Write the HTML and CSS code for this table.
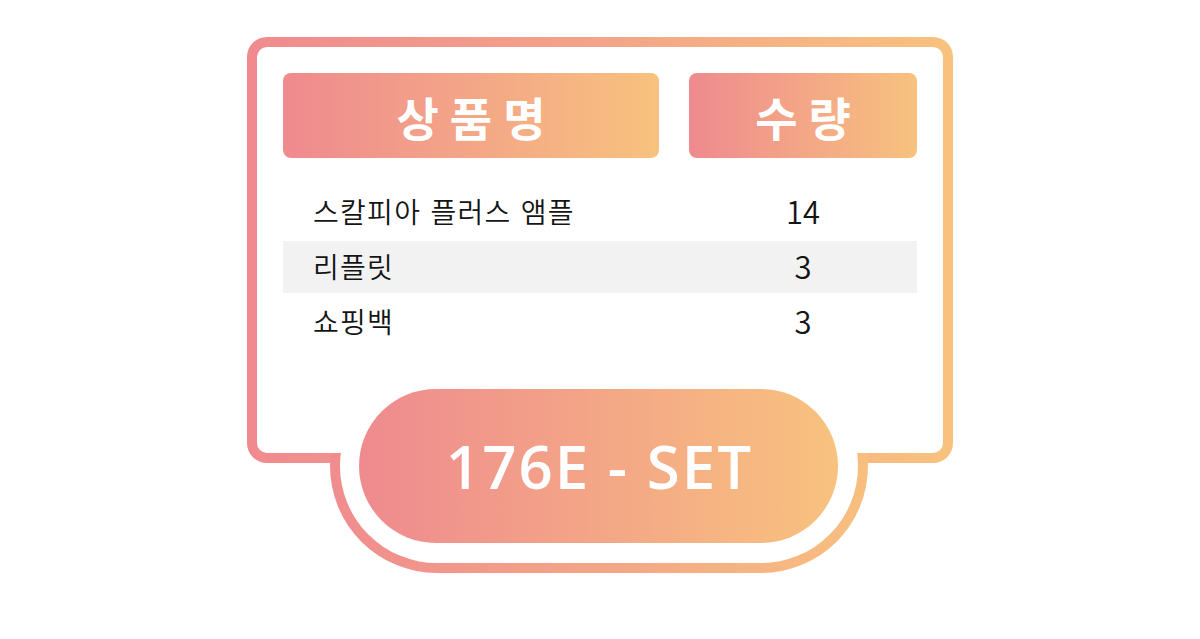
FILE: index.html
```html
<!DOCTYPE html>
<html lang="ko">
<head>
<meta charset="utf-8">
<title>176E - SET</title>
<link rel="stylesheet" href="styles.css">
</head>
<body>
<main class="stage">
  <section class="card">
    <div class="card-inner">
      <div class="row head">
        <div class="cell name"><span class="head-label">상품명</span></div>
        <div class="cell qty"><span class="head-label">수량</span></div>
      </div>
      <div class="rows">
        <div class="row item">
          <div class="cell name">스칼피아 플러스 앰플</div>
          <div class="cell qty">14</div>
        </div>
        <div class="row item alt">
          <div class="cell name">리플릿</div>
          <div class="cell qty">3</div>
        </div>
        <div class="row item">
          <div class="cell name">쇼핑백</div>
          <div class="cell qty">3</div>
        </div>
      </div>
    </div>
    <div class="badge">
      <div class="ring-clip"><div class="ring"></div></div>
      <div class="pill">176E - SET</div>
    </div>
  </section>
</main>
</body>
</html>
```

FILE: styles.css
```css
html, body {
  margin: 0;
  padding: 0;
  background: #ffffff;
}

body {
  width: 1200px;
  height: 639px;
  overflow: hidden;
  font-family: "Noto Sans CJK KR", "Noto Sans", sans-serif;
}

.stage {
  display: flex;
  justify-content: center;
  padding-top: 37px;
}

.card {
  position: relative;
  width: 706px;
  height: 426px;
  box-sizing: border-box;
  padding: 10px;
  border-radius: 20px;
  background: linear-gradient(90deg, #f08a8f 0%, #f3a489 50%, #f8c27e 100%);
}

.card-inner {
  height: 100%;
  box-sizing: border-box;
  background: #ffffff;
  border-radius: 10px;
  padding: 26px 26px 0 26px;
}

.row {
  display: flex;
  gap: 30px;
}

.cell.name {
  width: 376px;
  flex: none;
}

.cell.qty {
  width: 228px;
  flex: none;
  text-align: center;
}

.head .cell {
  height: 85px;
  border-radius: 8px;
  background: linear-gradient(90deg, #ef8a8f 0%, #f8c27e 100%);
  display: flex;
  align-items: center;
  justify-content: center;
}

.head-label {
  color: #ffffff;
  font-weight: 700;
  font-size: 46px;
  letter-spacing: 11px;
  padding-left: 11px;
  line-height: 1;
}

.rows {
  margin-top: 28px;
  display: flex;
  flex-direction: column;
  gap: 3px;
}

.item {
  height: 52px;
  align-items: center;
  color: #141414;
}

.item .cell {
  padding-bottom: 3px;
  box-sizing: border-box;
}

.item .cell.name {
  padding-left: 30px;
  font-size: 28px;
  font-weight: 350;
  letter-spacing: 1.3px;
}

.item .cell.qty {
  font-size: 31px;
  font-weight: 350;
}

.item.alt {
  background: #f2f2f2;
}

.badge {
  position: absolute;
  left: 83px;
  top: 322px;
  width: 538px;
  height: 214px;
}

.ring-clip {
  position: absolute;
  left: 0;
  right: 0;
  top: 94px;
  bottom: 0;
  overflow: hidden;
}

.ring {
  position: absolute;
  left: 0;
  top: -94px;
  width: 538px;
  height: 214px;
  box-sizing: border-box;
  border-radius: 107px;
  padding: 10px;
  background: linear-gradient(90deg, #f08c8e 0%, #f8bf7f 100%);
}

.ring::after {
  content: "";
  display: block;
  width: 100%;
  height: 100%;
  border-radius: 97px;
  background: #ffffff;
}

.pill {
  position: absolute;
  left: 29px;
  top: 30px;
  width: 479px;
  height: 154px;
  border-radius: 77px;
  background: linear-gradient(90deg, #ef8a8f 0%, #f8c27e 100%);
  color: #ffffff;
  font-family: "Open Sans", "Noto Sans", sans-serif;
  font-weight: 600;
  font-size: 60px;
  letter-spacing: 2px;
  padding-left: 2px;
  box-sizing: border-box;
  display: flex;
  align-items: center;
  justify-content: center;
  line-height: 1;
}
```
